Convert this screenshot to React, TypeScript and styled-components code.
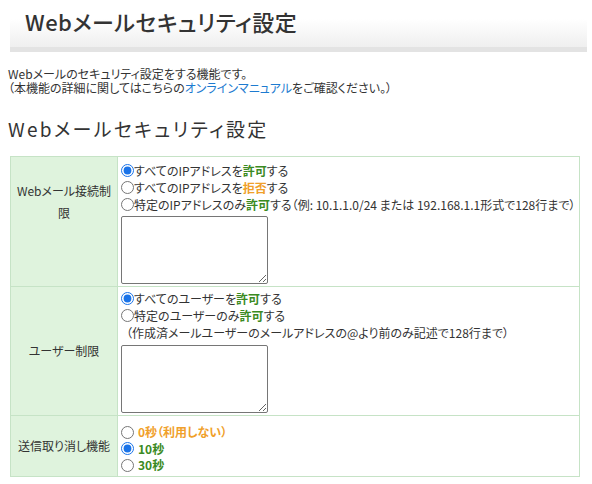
import React from "react";
import styled, { createGlobalStyle } from "styled-components";

const Global = createGlobalStyle`
  html, body { margin: 0; padding: 0; background: #fff; }
  body {
    font-family: "Noto Sans CJK JP", "Noto Sans", sans-serif;
    font-size: 12px;
    color: #333;
    font-feature-settings: "palt";
  }
`;

const Page = styled.div`
  display: flex;
  flex-direction: column;
  padding: 0 0 0 8px;
`;

const TitleBar = styled.div`
  margin: 0 5px 0 2px;
  height: 47px;
  background: linear-gradient(#ffffff 0%, #ffffff 40%, #efefef 100%);
  border-bottom: 5px solid #e3e3e3;
  display: flex;
  align-items: center;
  padding-left: 15px;
`;

const Title = styled.h1`
  margin: 0;
  margin-top: -6px;
  font-size: 22px;
  font-weight: 500;
  color: #333;
  letter-spacing: 0.5px;
`;

const Desc = styled.div`
  margin-top: 15px;
  display: flex;
  flex-direction: column;
`;

const DescLine = styled.div`
  line-height: 13.5px;
  font-size: 12px;
  color: #333;
  white-space: nowrap;
`;

const Link = styled.a`
  color: #1d7bd0;
  text-decoration: none;
`;

const Heading = styled.h2`
  margin: 23px 0 0;
  font-size: 19px;
  font-weight: 400;
  letter-spacing: 2.3px;
  color: #333;
  line-height: 24px;
`;

const Table = styled.table`
  margin: 15px 0 0 2px;
  width: 570px;
  border-collapse: collapse;
`;

const Th = styled.th<{ $top?: number }>`
  width: 96px;
  background: #dff3dd;
  border: 1px solid #c6e3c6;
  font-weight: 400;
  font-size: 12px;
  color: #333;
  text-align: center;
  vertical-align: ${(p) => (p.$top !== undefined ? "top" : "middle")};
  padding: ${(p) => p.$top ?? 0}px 5px 0;
  line-height: 22px;
`;

const Td = styled.td`
  border: 1px solid #c6e3c6;
  padding: 2px 0 2px 2px;
  vertical-align: top;
`;

const Options = styled.div<{ $gap?: number; $pad?: number; $padBottom?: number }>`
  display: flex;
  flex-direction: column;
  line-height: ${(p) => (p.$gap ? p.$gap : 17)}px;
  padding-top: ${(p) => p.$pad ?? 0}px;
  padding-bottom: ${(p) => p.$padBottom ?? 0}px;
`;

const Option = styled.label<{ $spaced?: boolean }>`
  display: flex;
  align-items: center;
  white-space: nowrap;
  color: #333;
  gap: ${(p) => (p.$spaced ? "4px" : "0")};
`;

const Radio = styled.input.attrs({ type: "radio" })`
  margin: 0 0 0 1px;
  width: 13px;
  height: 13px;
  accent-color: #1a73e8;
`;

const Strong = styled.b<{ $c: string }>`
  color: ${(p) => p.$c};
  font-weight: 700;
`;

const Note = styled.div`
  padding-left: 6px;
  white-space: nowrap;
`;

const Area = styled.textarea<{ $mt: number }>`
  display: block;
  box-sizing: border-box;
  width: 147px;
  height: 68px;
  margin: ${(p) => p.$mt}px 0 0 1px;
  border: 1px solid #767676;
  border-radius: 2px;
  resize: both;
`;

const GREEN = "#3b8a22";
const ORANGE = "#f0a02a";

export default function App() {
  return (
    <>
      <Global />
      <Page>
        <TitleBar>
          <Title>Webメールセキュリティ設定</Title>
        </TitleBar>
        <Desc>
          <DescLine>Webメールのセキュリティ設定をする機能です。</DescLine>
          <DescLine>
            （本機能の詳細に関してはこちらの<Link href="#">オンラインマニュアル</Link>をご確認ください。）
          </DescLine>
        </Desc>
        <Heading>Webメールセキュリティ設定</Heading>
        <Table>
          <tbody>
            <tr>
              <Th $top={23}>Webメール接続制限</Th>
              <Td>
                <Options $pad={3}>
                  <Option>
                    <Radio name="ip" defaultChecked />
                    すべてのIPアドレスを<Strong $c={GREEN}>許可</Strong>する
                  </Option>
                  <Option>
                    <Radio name="ip" />
                    すべてのIPアドレスを<Strong $c={ORANGE}>拒否</Strong>する
                  </Option>
                  <Option>
                    <Radio name="ip" />
                    特定のIPアドレスのみ<Strong $c={GREEN}>許可</Strong>する（例: 10.1.1.0/24 または 192.168.1.1形式で128行まで）
                  </Option>
                </Options>
                <Area $mt={3} />
              </Td>
            </tr>
            <tr>
              <Th>ユーザー制限</Th>
              <Td>
                <Options $pad={1}>
                  <Option>
                    <Radio name="user" defaultChecked />
                    すべてのユーザーを<Strong $c={GREEN}>許可</Strong>する
                  </Option>
                  <Option>
                    <Radio name="user" />
                    特定のユーザーのみ<Strong $c={GREEN}>許可</Strong>する
                  </Option>
                  <Note>（作成済メールユーザーのメールアドレスの@より前のみ記述で128行まで）</Note>
                </Options>
                <Area $mt={4} />
              </Td>
            </tr>
            <tr>
              <Th>送信取り消し機能</Th>
              <Td>
                <Options $gap={16.5} $pad={6} $padBottom={0}>
                  <Option $spaced>
                    <Radio name="undo" />
                    <Strong $c={ORANGE}>0秒（利用しない）</Strong>
                  </Option>
                  <Option $spaced>
                    <Radio name="undo" defaultChecked />
                    <Strong $c={GREEN}>10秒</Strong>
                  </Option>
                  <Option $spaced>
                    <Radio name="undo" />
                    <Strong $c={GREEN}>30秒</Strong>
                  </Option>
                </Options>
              </Td>
            </tr>
          </tbody>
        </Table>
      </Page>
    </>
  );
}
